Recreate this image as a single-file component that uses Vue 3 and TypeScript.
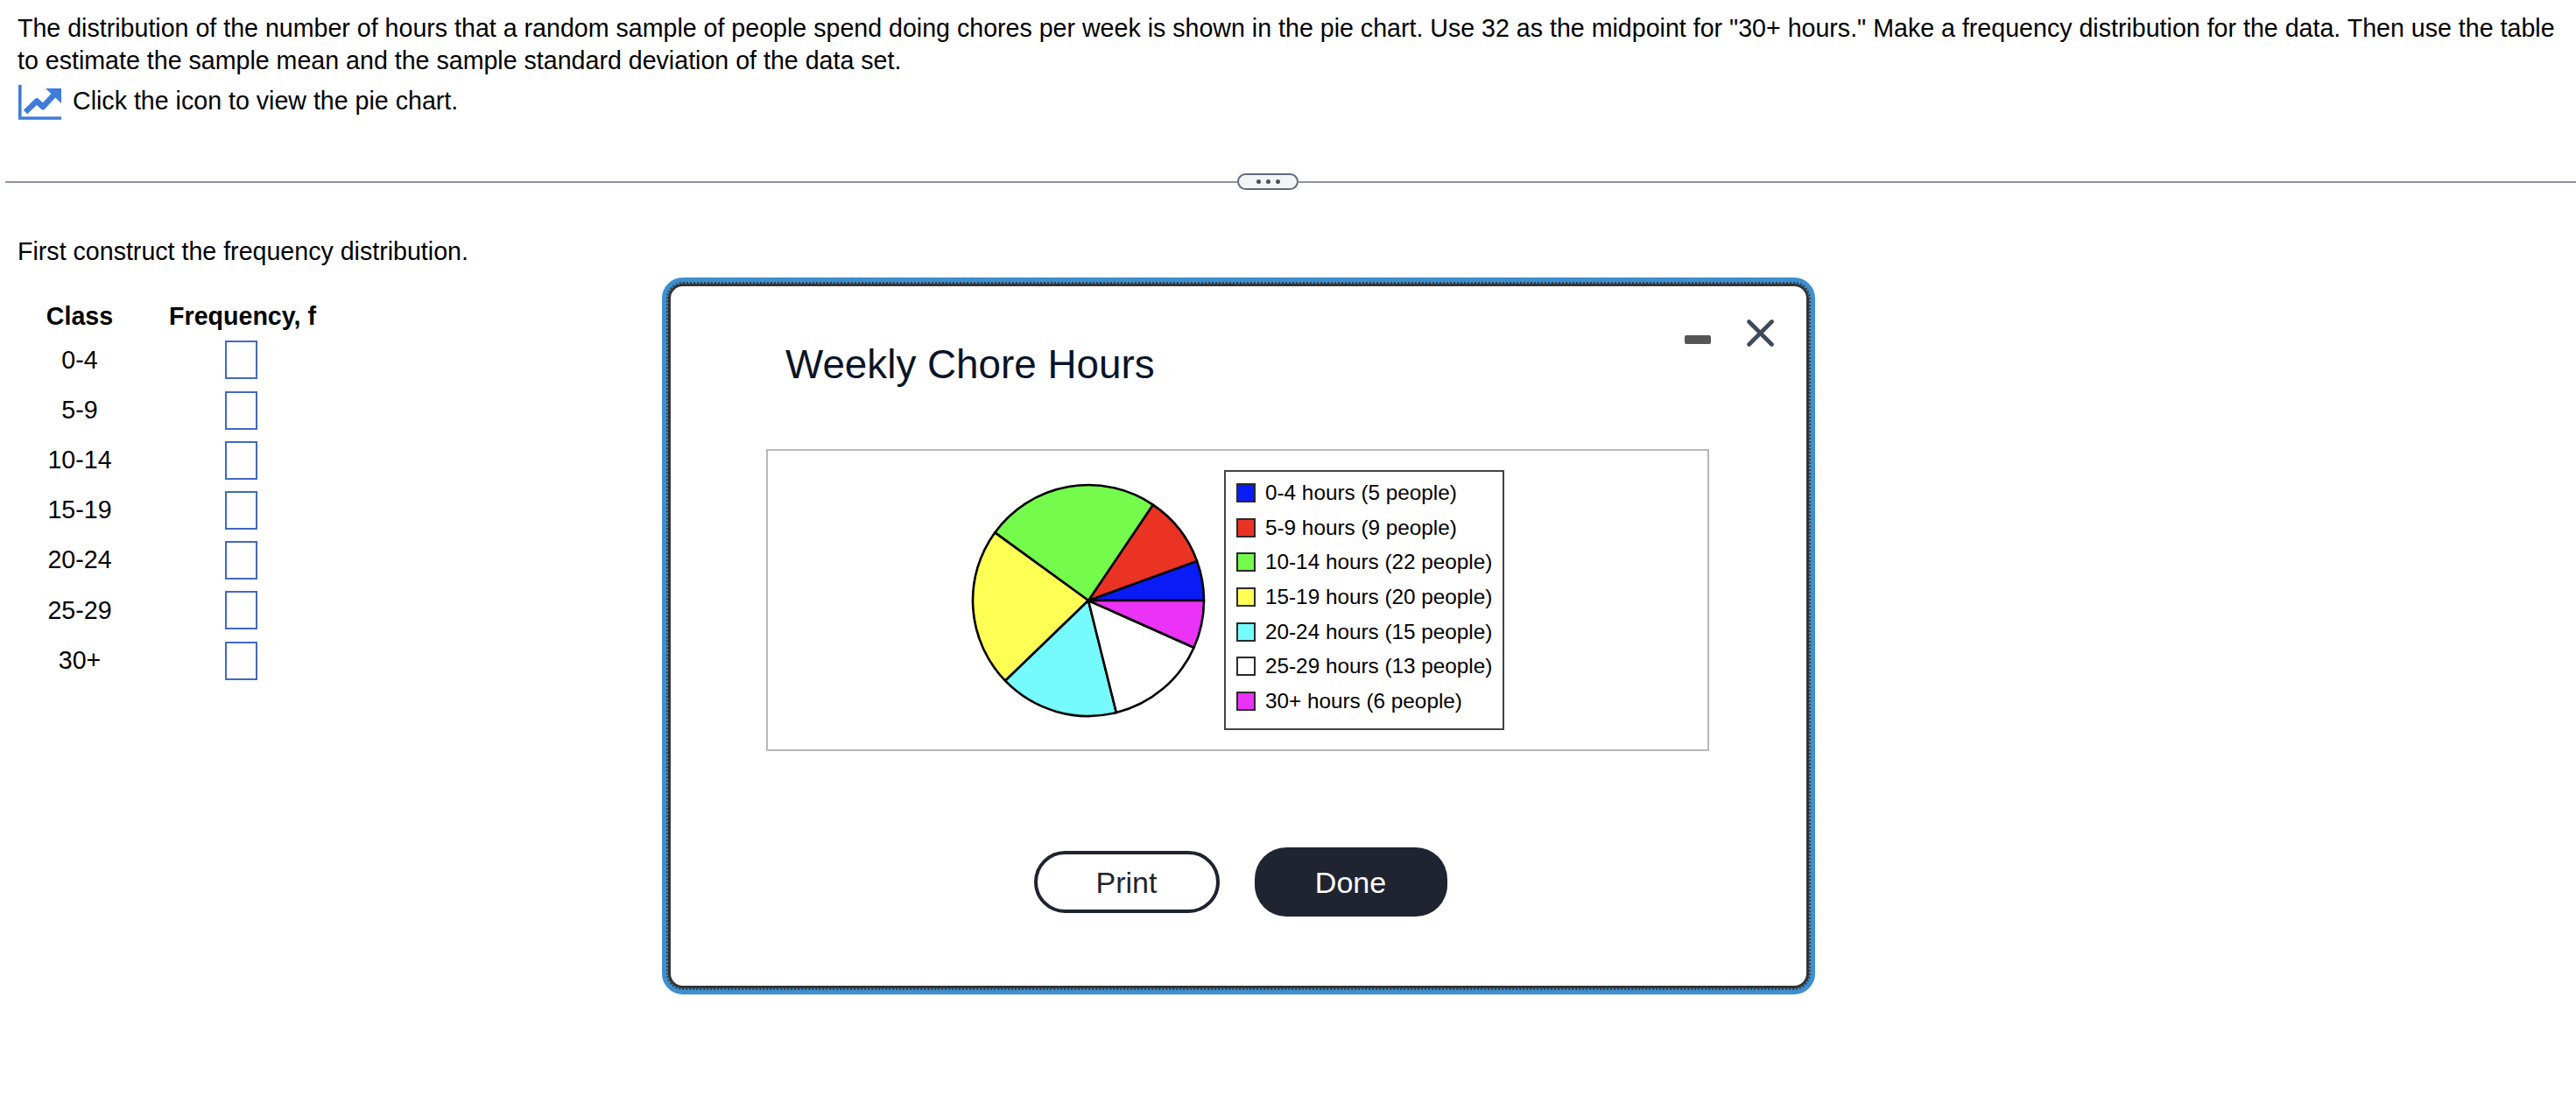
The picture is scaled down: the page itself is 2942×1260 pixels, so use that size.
<script setup lang="ts">
interface Slice {
  label: string;
  people: number;
  color: string;
}

const classes = ['0-4', '5-9', '10-14', '15-19', '20-24', '25-29', '30+'];

const slices: Slice[] = [
  { label: '0-4 hours (5 people)', people: 5, color: '#0a1cf5' },
  { label: '5-9 hours (9 people)', people: 9, color: '#ea3323' },
  { label: '10-14 hours (22 people)', people: 22, color: '#75fb4c' },
  { label: '15-19 hours (20 people)', people: 20, color: '#ffff54' },
  { label: '20-24 hours (15 people)', people: 15, color: '#75fbfd' },
  { label: '25-29 hours (13 people)', people: 13, color: '#ffffff' },
  { label: '30+ hours (6 people)', people: 6, color: '#ea33f7' },
];

const total = slices.reduce((sum, s) => sum + s.people, 0);
const cx = 134;
const cy = 134;
const r = 132;

// slices run counter-clockwise from 3 o'clock
let running = 0;
const wedges = slices.map((s) => {
  const a0 = (running / total) * Math.PI * 2;
  running += s.people;
  const a1 = (running / total) * Math.PI * 2;
  const x0 = cx + r * Math.cos(a0);
  const y0 = cy - r * Math.sin(a0);
  const x1 = cx + r * Math.cos(a1);
  const y1 = cy - r * Math.sin(a1);
  const large = a1 - a0 > Math.PI ? 1 : 0;
  return {
    color: s.color,
    d: `M${cx} ${cy} L${x0.toFixed(2)} ${y0.toFixed(2)} A${r} ${r} 0 ${large} 0 ${x1.toFixed(2)} ${y1.toFixed(2)} Z`,
  };
});
</script>

<template>
  <div class="page">
    <p class="question">
      The distribution of the number of hours that a random sample of people spend doing chores per week is shown in the pie chart. Use 32 as the midpoint for "30+ hours." Make a frequency distribution for the data. Then use the table to estimate the sample mean and the sample standard deviation of the data set.
    </p>
    <div class="icon-row">
      <svg class="chart-icon" width="49" height="40" viewBox="0 0 49 40">
        <path d="M1.8 0 V38 H49" fill="none" stroke="#3f7bd9" stroke-width="3.6" />
        <path d="M8 31 L21 18.5 L28 25 L41 11" fill="none" stroke="#3f7bd9" stroke-width="6.5" stroke-linejoin="round" />
        <path d="M31 4 H49 V21 Z" fill="#3f7bd9" />
      </svg>
      <span>Click the icon to view the pie chart.</span>
    </div>

    <div class="divider">
      <span class="rule rule-left"></span>
      <span class="more"><i></i><i></i><i></i></span>
      <span class="rule rule-right"></span>
    </div>

    <p class="prompt">First construct the frequency distribution.</p>

    <div class="freq-table">
      <div class="freq-row freq-head">
        <span class="col-class">Class</span>
        <span class="col-freq">Frequency, f</span>
      </div>
      <div v-for="c in classes" :key="c" class="freq-row">
        <span class="col-class cell-label">{{ c }}</span>
        <span class="col-freq"><span class="answer-box"></span></span>
      </div>
    </div>

    <div class="modal">
      <div class="modal-dots">
        <div class="modal-body">
          <div class="modal-head">
            <h2 class="modal-title">Weekly Chore Hours</h2>
            <div class="modal-controls">
              <span class="minimize"></span>
              <svg width="31" height="31" viewBox="0 0 31 31">
                <path d="M2.5 2.5 L28.5 28.5 M28.5 2.5 L2.5 28.5" stroke="#3d4a5a" stroke-width="4.6" stroke-linecap="round" />
              </svg>
            </div>
          </div>

          <div class="chart-box">
            <svg class="pie" width="268" height="268" viewBox="0 0 268 268">
              <path
                v-for="(w, i) in wedges"
                :key="i"
                :d="w.d"
                :fill="w.color"
                stroke="#000"
                stroke-width="2.6"
                stroke-linejoin="round"
              />
            </svg>
            <ul class="legend">
              <li v-for="s in slices" :key="s.label">
                <span class="swatch" :style="{ backgroundColor: s.color }"></span>
                {{ s.label }}
              </li>
            </ul>
          </div>

          <div class="modal-actions">
            <button class="btn btn-print">Print</button>
            <button class="btn btn-done">Done</button>
          </div>
        </div>
      </div>
    </div>
  </div>
</template>

<style>
html,
body {
  background: #fff;
}
</style>

<style scoped>
.page {
  position: relative;
  height: 1260px;
  overflow: hidden;
  box-sizing: border-box;
  padding-top: 14px;
  font-family: "Liberation Sans", Arial, sans-serif;
  font-size: 28.6px;
  line-height: 36.5px;
  color: #000;
}

.question {
  margin: 0;
  padding: 0 20px;
}

.icon-row {
  display: flex;
  align-items: flex-start;
  gap: 13px;
  margin: 10px 0 0 21px;
  height: 40px;
}

.chart-icon {
  flex: none;
}

.divider {
  display: flex;
  align-items: center;
  margin: 61px 0 0 6px;
  height: 19px;
}

.rule {
  height: 2px;
  background: #8a94a6;
}

.rule-left {
  flex: 0 0 1407px;
}

.rule-right {
  flex: 1;
}

.more {
  flex: 0 0 70px;
  box-sizing: border-box;
  height: 19px;
  display: flex;
  align-items: center;
  justify-content: center;
  gap: 6px;
  border: 2.5px solid #5f6b7a;
  border-radius: 10px;
  background: #f3f4f6;
}

.more i {
  width: 5px;
  height: 5px;
  border-radius: 50%;
  background: #4a4f57;
}

.prompt {
  margin: 52px 0 0;
  padding-left: 20px;
}

.freq-table {
  margin: 37px 0 0 34px;
}

.freq-row {
  display: flex;
  align-items: center;
  height: 57.2px;
}

.freq-head {
  height: 40.4px;
  align-items: flex-start;
  font-weight: 700;
}

.col-class {
  width: 114px;
  text-align: center;
}

.cell-label {
  margin-bottom: 1px;
}

.col-freq {
  width: 168px;
  margin-left: 45px;
  text-align: center;
  white-space: nowrap;
}

.answer-box {
  display: block;
  box-sizing: border-box;
  width: 37px;
  height: 44px;
  margin: 0 auto;
  position: relative;
  left: -1.5px;
  border: 2px solid #4169c4;
}

.modal {
  position: absolute;
  left: 756px;
  top: 317px;
  width: 1317px;
  box-sizing: border-box;
  border: 5px solid #3d8fcf;
  border-radius: 24px;
  background: #3d8fcf;
}

.modal-dots {
  border: 2px dotted #3a3f44;
  border-radius: 19px;
}

.modal-body {
  border: 3px solid #333;
  border-radius: 17px;
  background: #fff;
  padding-bottom: 79px;
}

.modal-head {
  display: flex;
  justify-content: space-between;
  align-items: flex-start;
  padding: 38px 37px 0 131px;
}

.modal-title {
  margin: 25px 0 0;
  font-size: 45.8px;
  line-height: 54px;
  font-weight: 400;
  color: #0a1428;
}

.modal-controls {
  display: flex;
  align-items: flex-start;
  gap: 41px;
}

.minimize {
  width: 30px;
  height: 10px;
  margin-top: 18px;
  border-radius: 2px;
  background: #555;
}

.chart-box {
  box-sizing: border-box;
  width: 1077px;
  height: 345px;
  margin: 69px 0 0 109px;
  border: 2px solid #b8b8b8;
  display: flex;
  align-items: center;
  justify-content: center;
  gap: 21px;
}

.pie {
  flex: none;
}

.legend {
  box-sizing: border-box;
  width: 320px;
  height: 297px;
  margin: 0;
  padding: 4px 0 0 12px;
  list-style: none;
  border: 2px solid #444;
  font-size: 24.3px;
  line-height: 30px;
}

.legend li {
  display: flex;
  align-items: center;
  gap: 11px;
  height: 39.7px;
  white-space: nowrap;
}

.swatch {
  flex: none;
  box-sizing: border-box;
  width: 22px;
  height: 22px;
  border: 2.5px solid #2a2a2a;
}

.modal-actions {
  display: flex;
  align-items: center;
  justify-content: center;
  gap: 40px;
  margin-top: 110px;
  padding-left: 4px;
}

.btn {
  box-sizing: border-box;
  font-family: inherit;
  font-size: 34px;
  line-height: 40px;
  padding: 0;
  cursor: pointer;
}

.btn-print {
  width: 212px;
  height: 71px;
  border: 4px solid #1f2430;
  border-radius: 36px;
  background: #fff;
  color: #1f2430;
}

.btn-done {
  width: 220px;
  height: 79px;
  border: none;
  border-radius: 36px;
  background: #1f2430;
  color: #fff;
}
</style>
